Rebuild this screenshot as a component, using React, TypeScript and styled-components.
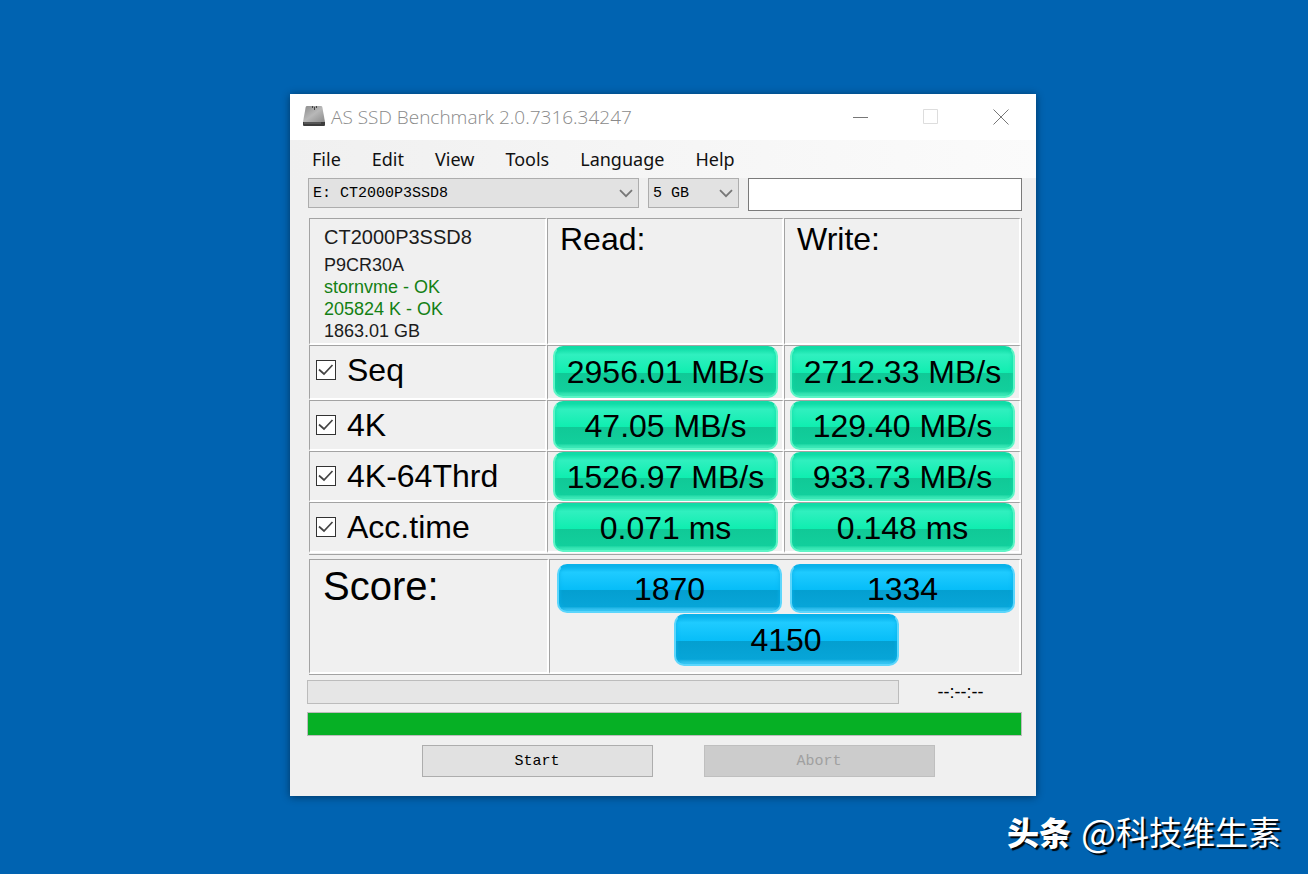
import React from "react";
import styled, { createGlobalStyle } from "styled-components";

const GlobalStyle = createGlobalStyle`
  *, *::before, *::after { box-sizing: border-box; }
  body {
    margin: 0;
    background: #0063b1;
    color: #000;
    font-family: "Liberation Sans", Arial, sans-serif;
  }
`;

const LINE = "#a3a3a3";

const Desktop = styled.div`
  min-height: 100vh;
  padding: 94px 27px 0;
`;

const Window = styled.main`
  min-width: 640px;
  margin: 0 245px 0 263px;
  padding-bottom: 19px;
  background: #f0f0f0;
  box-shadow: 0 1px 8px rgba(0, 0, 0, 0.45);
`;

const TitleBar = styled.header`
  display: flex;
  align-items: center;
  height: 46px;
  padding-left: 12px;
  background: #fff;
`;

const Title = styled.h1`
  flex: 1;
  margin: 0 0 0 5px;
  color: #8a8a8a;
  font: 300 19px/24px "Open Sans", sans-serif;
`;

const CaptionButton = styled.button`
  display: grid;
  place-items: center;
  width: 70px;
  height: 46px;
  padding: 0;
  border: 0;
  background: none;
`;

const MenuBar = styled.nav`
  display: flex;
  gap: 31px;
  height: 38px;
  padding-left: 22px;
  background: linear-gradient(90deg, #f0f0f0, #fbfbfb);
`;

const MenuItem = styled.button`
  padding: 0;
  border: 0;
  background: none;
  color: #111;
  font: 400 18px/38px "Noto Sans", sans-serif;
`;

const Content = styled.div`
  padding: 0 14px 0 17px;
`;

const Controls = styled.div`
  display: grid;
  grid-template-columns: 331fr 91px 274fr;
  align-items: start;
  gap: 9px;
  padding-left: 1px;
`;

const SelectBox = styled.label`
  display: grid;
  align-items: center;

  > select, > svg { grid-area: 1 / 1; }
  > svg { justify-self: end; margin-right: 6px; pointer-events: none; }
`;

const Select = styled.select`
  appearance: none;
  width: 100%;
  height: 30px;
  padding: 0 24px 0 4px;
  border: 1px solid #adadad;
  border-radius: 0;
  background: #e2e2e2;
  color: #000;
  font: 400 15px "Liberation Mono", monospace;
`;

const TextField = styled.input`
  width: 100%;
  height: 33px;
  padding: 0 6px;
  border: 1px solid #7a7a7a;
  background: #fff;
  font: 400 15px "Liberation Mono", monospace;
`;

const Panel = styled.table`
  width: calc(100% - 2px);
  margin: 0 0 0 2px;
  border: solid ${LINE};
  border-width: 0 1px 1px 0;
  border-spacing: 0;
  table-layout: fixed;
`;

const Results = styled(Panel)`
  margin-top: 7px;
  padding-bottom: 1px;
`;

const Scores = styled(Panel)`
  margin-top: 4px;
`;

const Cell = styled.td`
  padding: 0;
  border: solid;
  border-width: 1px 2px 2px 1px;
  border-color: ${LINE} #fff #fff ${LINE};
  vertical-align: top;
  text-align: left;
  font-weight: 400;
`;

const InfoCell = styled(Cell)`
  width: 238px;
  height: 127px;
  padding: 4px 0 0 14px;
  color: #1c1c1c;
  font-size: 18px;
  line-height: 22px;
`;

const ModelName = styled.div`
  margin-bottom: 3px;
  font-size: 20px;
  line-height: 28px;
`;

const InfoLine = styled.div<{ $ok?: boolean }>`
  color: ${(p) => (p.$ok ? "#148014" : "inherit")};
`;

const HeadCell = styled(Cell)`
  padding: 2px 0 0 12px;
  font-size: 32px;
  line-height: 36px;
`;

const TestLabel = styled.label`
  display: flex;
  align-items: center;
  height: 48px;
  padding-left: 6px;
  font-size: 32px;
`;

const TickBox = styled.span`
  display: grid;
  width: 20px;
  height: 20px;
  margin-right: 11px;

  > * { grid-area: 1 / 1; }
  > svg { visibility: hidden; pointer-events: none; }
  > input:checked + svg { visibility: visible; }
`;

const Tick = styled.input`
  appearance: none;
  width: 20px;
  height: 20px;
  margin: 0;
  border: 1px solid #333;
  background: #fff;
`;

const tones = {
  green: { edge: "#5df5c6", rim: "#10dca6", top: "#30f0bf", mid: "#0feeb0", low: "#10c997", base: "#12cf9c" },
  blue: { edge: "#5cd6fc", rim: "#08b2ea", top: "#1fcbff", mid: "#06bdf8", low: "#049fd0", base: "#07a5d8" },
};

const Pill = styled.div<{ $tone: keyof typeof tones; $tall?: boolean }>`
  flex: 0 1 225px;
  height: ${(p) => (p.$tall ? 52 : 49)}px;
  border: 2px solid ${(p) => tones[p.$tone].edge};
  border-top-color: ${(p) => tones[p.$tone].rim};
  border-radius: 10px;
  background: ${({ $tone }) => {
    const t = tones[$tone];
    return `linear-gradient(${t.rim}, ${t.top} 14%, ${t.mid} 53%, ${t.low} 53%, ${t.base} 90%, ${t.edge})`;
  }};
  box-shadow: inset 0 0 4px ${(p) => tones[p.$tone].rim};
  font-size: 32px;
  line-height: ${(p) => (p.$tall ? 49 : 47)}px;
  text-align: center;
  white-space: nowrap;
`;

const PillSlot = styled.div<{ $tall?: boolean }>`
  display: flex;
  height: ${(p) => (p.$tall ? 52 : 48)}px;
  padding: 0 4px 0 5px;

  > div { flex: 1; }
`;

const ScoreTitle = styled(Cell)`
  width: 240px;
  height: 115px;
  padding: 3px 0 0 13px;
  font-size: 40px;
  line-height: 46px;
`;

const ScoreList = styled.div`
  display: flex;
  flex-wrap: wrap;
  justify-content: center;
  gap: 1px 8px;
  padding: 4px 4px 0 7px;
`;

const StatusRow = styled.div`
  display: grid;
  grid-template-columns: 593fr 123px;
  align-items: center;
  margin-top: 5px;
`;

const Bar = styled.progress`
  display: block;
  appearance: none;
  width: 100%;
  height: 24px;
  border: 1px solid #bcbcbc;
  background: #e6e6e6;

  &::-webkit-progress-bar { background: #e6e6e6; }
  &::-webkit-progress-value { background: #06b025; }
`;

const Clock = styled.time`
  font: 400 18px/24px "Liberation Sans", Arial, sans-serif;
  text-align: center;
`;

const Total = styled.div`
  margin-top: 8px;
`;

const Actions = styled.div`
  display: flex;
  justify-content: center;
  gap: 51px;
  margin-top: 9px;
  padding-left: 27px;
`;

const Action = styled.button`
  width: 231px;
  height: 32px;
  padding: 0;
  border: 1px solid #adadad;
  background: #e1e1e1;
  color: #000;
  font: 400 15px "Liberation Mono", monospace;

  &:disabled {
    border-color: #bfbfbf;
    background: #ccc;
    color: #a0a0a0;
  }
`;

const Credit = styled.footer`
  display: flex;
  justify-content: flex-end;
  align-items: center;
  gap: 10px;
  margin-top: 15px;
  color: #fff;
  font: 400 33px/40px "Noto Sans CJK SC", sans-serif;
  text-shadow: 2px 2px 1px #000;
`;

const Brand = styled.strong`
  font-size: 32px;
  font-weight: 900;
`;

const Handle = styled.span`
  display: flex;
`;

const AtSign = styled.span`
  font-size: 37px;
`;

const DriveIcon = () => (
  <svg width="24" height="22" viewBox="0 0 24 22" aria-hidden="true">
    <defs>
      <linearGradient id="drive" x1="0" y1="0" x2="1" y2="1">
        <stop offset="0" stopColor="#8a8a8a" />
        <stop offset="0.5" stopColor="#b8b8b8" />
        <stop offset="1" stopColor="#8a8a8a" />
      </linearGradient>
    </defs>
    <path d="M5 0h14q1 0 1.300 1L23 16H1L3.700 1Q4 0 5 0z" fill="url(#drive)" />
    <path d="M1 16h22v3q0 1-1 1H2q-1 0-1-1z" fill="#3c3c3c" />
    <path d="M2 17h17" stroke="#707070" />
    <path d="M10.500 0v2M12.500 1v3M14.500 0v2" stroke="#444" />
  </svg>
);

const Chevron = () => (
  <svg width="14" height="9" viewBox="0 0 14 9" fill="none" stroke="#777" strokeWidth="1.800" aria-hidden="true">
    <path d="M1 1.200l6 6 6-6" />
  </svg>
);

const CheckMark = () => (
  <svg width="20" height="20" viewBox="0 0 20 20" fill="none" stroke="#444" strokeWidth="1.700" aria-hidden="true">
    <path d="M3 9.500l5 4.500 8.500-9" />
  </svg>
);

const menus = ["File", "Edit", "View", "Tools", "Language", "Help"];

const tests = [
  { name: "Seq", read: "2956.01 MB/s", write: "2712.33 MB/s" },
  { name: "4K", read: "47.05 MB/s", write: "129.40 MB/s" },
  { name: "4K-64Thrd", read: "1526.97 MB/s", write: "933.73 MB/s" },
  { name: "Acc.time", read: "0.071 ms", write: "0.148 ms" },
];

const Result = ({ value, tall }: { value: string; tall: boolean }) => (
  <Cell>
    <PillSlot $tall={tall}>
      <Pill $tone="green" $tall={tall}>{value}</Pill>
    </PillSlot>
  </Cell>
);

export default function App() {
  return (
    <Desktop>
      <GlobalStyle />
      <Window>
        <TitleBar>
          <DriveIcon />
          <Title>AS SSD Benchmark 2.0.7316.34247</Title>
          <CaptionButton aria-label="Minimize">
            <svg width="16" height="16" stroke="#777"><path d="M0 8.500h15" /></svg>
          </CaptionButton>
          <CaptionButton aria-label="Maximize" disabled>
            <svg width="16" height="16" fill="none" stroke="#ddd"><path d="M.5.500h14v14H.5z" /></svg>
          </CaptionButton>
          <CaptionButton aria-label="Close">
            <svg width="16" height="16" stroke="#777"><path d="M.5.500l15 15M15.500.500l-15 15" /></svg>
          </CaptionButton>
        </TitleBar>
        <MenuBar>
          {menus.map((m) => <MenuItem key={m}>{m}</MenuItem>)}
        </MenuBar>
        <Content>
          <Controls>
            <SelectBox>
              <Select aria-label="Drive"><option>E: CT2000P3SSD8</option></Select>
              <Chevron />
            </SelectBox>
            <SelectBox>
              <Select aria-label="Test size"><option>5 GB</option></Select>
              <Chevron />
            </SelectBox>
            <TextField aria-label="Note" />
          </Controls>

          <Results>
            <thead>
              <tr>
                <InfoCell>
                  <ModelName>CT2000P3SSD8</ModelName>
                  <InfoLine>P9CR30A</InfoLine>
                  <InfoLine $ok>stornvme - OK</InfoLine>
                  <InfoLine $ok>205824 K - OK</InfoLine>
                  <InfoLine>1863.01 GB</InfoLine>
                </InfoCell>
                <HeadCell as="th" scope="col">Read:</HeadCell>
                <HeadCell as="th" scope="col">Write:</HeadCell>
              </tr>
            </thead>
            <tbody>
              {tests.map((t, i) => (
                <tr key={t.name}>
                  <Cell as="th" scope="row">
                    <TestLabel>
                      <TickBox>
                        <Tick type="checkbox" defaultChecked />
                        <CheckMark />
                      </TickBox>
                      {t.name}
                    </TestLabel>
                  </Cell>
                  <Result value={t.read} tall={i === 0} />
                  <Result value={t.write} tall={i === 0} />
                </tr>
              ))}
            </tbody>
          </Results>

          <Scores>
            <tbody>
              <tr>
                <ScoreTitle as="th" scope="row">Score:</ScoreTitle>
                <Cell>
                  <ScoreList>
                    <Pill $tone="blue">1870</Pill>
                    <Pill $tone="blue">1334</Pill>
                    <Pill $tone="blue" $tall>4150</Pill>
                  </ScoreList>
                </Cell>
              </tr>
            </tbody>
          </Scores>

          <StatusRow>
            <Bar value={0} max={100} aria-label="Current test" />
            <Clock>--:--:--</Clock>
          </StatusRow>
          <Total>
            <Bar value={100} max={100} aria-label="Overall progress" />
          </Total>
          <Actions>
            <Action>Start</Action>
            <Action disabled>Abort</Action>
          </Actions>
        </Content>
      </Window>
      <Credit>
        <Brand>头条</Brand>
        <Handle><AtSign>@</AtSign>科技维生素</Handle>
      </Credit>
    </Desktop>
  );
}
